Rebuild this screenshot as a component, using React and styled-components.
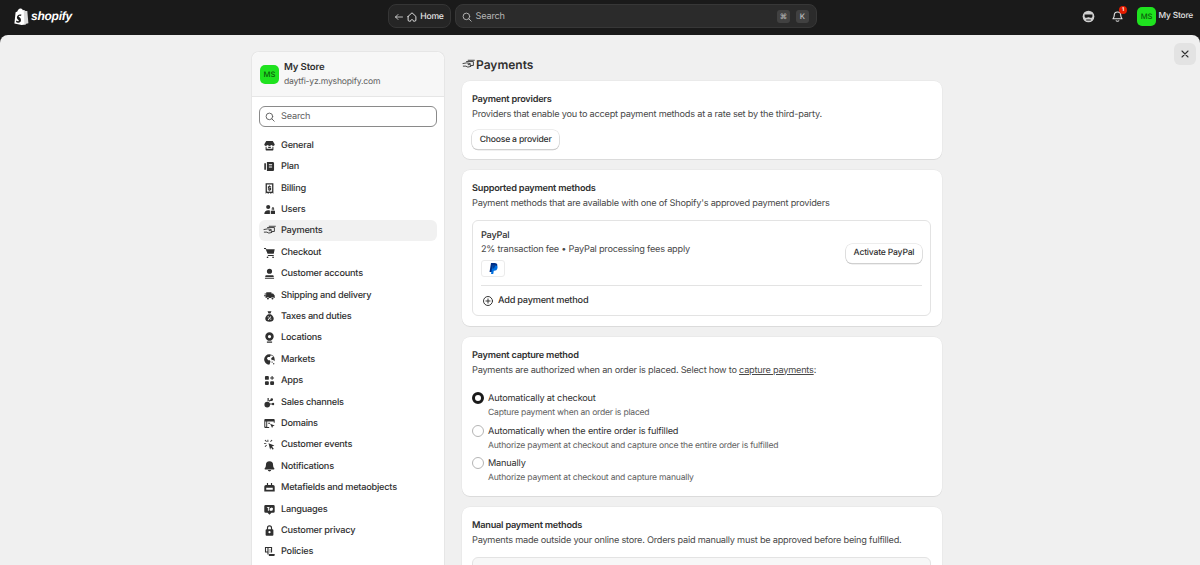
import React from 'react';
import styled, { createGlobalStyle } from 'styled-components';

const GlobalStyle = createGlobalStyle`
  html, body {
    margin: 0;
    height: 100%;
    overflow: hidden;
    background: #1a1a1a;
    font-family: Inter, "Liberation Sans", sans-serif;
    color: #303030;
    text-rendering: geometricPrecision;
  }
  * { box-sizing: border-box; }
`;

const Page = styled.div`
  height: 565px;
  display: flex;
  flex-direction: column;
  overflow: hidden;
`;

const TopBar = styled.header`
  height: 35px;
  flex: none;
  display: grid;
  grid-template-columns: 1fr auto 1fr;
  align-items: center;
  background: #1a1a1a;
  padding: 0 7px 3px 14px;
`;

const LogoWrap = styled.div`
  display: flex;
  align-items: center;
  gap: 2px;
`;

const LogoText = styled.span`
  font-family: "Liberation Sans", sans-serif;
  font-weight: 700;
  font-style: italic;
  font-size: 12px;
  letter-spacing: -0.25px;
  color: #fff;
`;

const CenterBar = styled.div`
  display: flex;
  gap: 4px;
  margin-left: -3px;
`;

const HomeButton = styled.div`
  width: 63px;
  height: 24px;
  display: flex;
  align-items: center;
  justify-content: center;
  gap: 2px;
  padding-top: 1px;
  border-radius: 8px;
  background: #252525;
  border: 1px solid #353535;
  color: #e3e3e3;
  font-size: 8.6px;
  letter-spacing: -0.2px;
  font-weight: 500;
`;

const SearchBar = styled.div`
  width: 362px;
  height: 24px;
  display: flex;
  align-items: center;
  gap: 3px;
  padding: 1px 7px 0 5px;
  border-radius: 8px;
  background: #2b2b2b;
  border: 1px solid #373737;
  color: #b5b5b5;
  font-size: 9.2px;
  letter-spacing: -0.2px;
`;

const Spacer = styled.span`
  flex: 1;
`;

const Kbd = styled.span`
  width: 12.5px;
  height: 13px;
  display: flex;
  align-items: center;
  justify-content: center;
  border-radius: 3px;
  background: #414141;
  color: #b5b5b5;
  font-size: 7.5px;
  font-weight: 600;
  margin-left: 3.5px;
`;

const RightBar = styled.div`
  display: flex;
  align-items: center;
  justify-content: flex-end;
  color: #e3e3e3;
`;

const TopIcon = styled.span`
  position: relative;
  display: flex;
  margin-right: ${p => p.$gap}px;
`;

const Badge = styled.span`
  position: absolute;
  top: -4px;
  right: -3px;
  width: 8px;
  height: 8px;
  display: flex;
  align-items: center;
  justify-content: center;
  border-radius: 50%;
  background: #e51c00;
  color: #fff;
  font-size: 5px;
  font-weight: 700;
`;

const Avatar = styled.span`
  width: ${p => p.$size}px;
  height: ${p => p.$size}px;
  flex: none;
  display: flex;
  align-items: center;
  justify-content: center;
  border-radius: 5px;
  background: #1fe21f;
  color: #0b5c0b;
  font-size: 7.6px;
  font-weight: 500;
`;

const TopStore = styled.span`
  margin-left: 2.5px;
  font-size: 8.4px;
  letter-spacing: -0.2px;
  font-weight: 500;
  color: #e3e3e3;
  white-space: nowrap;
`;

const Main = styled.main`
  position: relative;
  flex: 1;
  min-height: 0;
  display: flex;
  justify-content: center;
  gap: 17px;
  padding: 16px 7px 0 0;
  background: #f0f0f0;
  border-radius: 8px 8px 0 0;
  overflow: hidden;
`;

const CloseButton = styled.button`
  position: absolute;
  top: 8px;
  right: 4px;
  width: 22px;
  height: 22px;
  display: flex;
  align-items: center;
  justify-content: center;
  padding: 0;
  border: none;
  border-radius: 6px;
  background: #e3e3e3;
  color: #303030;
`;

const Sidebar = styled.aside`
  width: 194px;
  flex: none;
  background: #fff;
  border: 1px solid #e6e6e6;
  border-bottom: none;
  border-radius: 8px 8px 0 0;
  align-self: flex-start;
  height: 530px;
`;

const StoreHeader = styled.div`
  height: 45px;
  display: flex;
  align-items: center;
  gap: 5px;
  padding: 0 8px;
  background: #f7f7f7;
  border-bottom: 1px solid #e6e6e6;
  border-radius: 8px 8px 0 0;
`;

const StoreName = styled.div`
  font-size: 9.6px;
  letter-spacing: -0.15px;
  line-height: 15px;
  font-weight: 600;
`;

const StoreUrl = styled.div`
  font-size: 8.6px;
  letter-spacing: -0.2px;
  line-height: 14px;
  color: #616161;
`;

const SideBody = styled.div`
  padding: 9px 7px 8px;
`;

const SideSearch = styled.div`
  height: 21px;
  display: flex;
  align-items: center;
  gap: 5px;
  padding: 0 2px 0 4px;
  margin-bottom: 7px;
  border: 1px solid #8a8a8a;
  border-radius: 6px;
  color: #616161;
  font-size: 9.2px;
  letter-spacing: -0.2px;
`;

const NavItem = styled.div`
  height: 21.42px;
  display: flex;
  align-items: center;
  gap: 5px;
  padding: 1px 4px 0;
  border-radius: 6px;
  font-size: 9.2px;
  letter-spacing: -0.23px;
  font-weight: 500;
  color: #303030;
  background: ${p => (p.$active ? '#f1f1f1' : 'transparent')};
  & svg { flex: none; }
`;

const Content = styled.div`
  width: 480px;
  flex: none;
  display: flex;
  flex-direction: column;
`;

const PageTitle = styled.h1`
  height: 15px;
  margin: 6px 0 9px;
  display: flex;
  align-items: center;
  gap: 1px;
  font-size: 12px;
  font-weight: 600;
  color: #303030;
`;

const Card = styled.section`
  flex: none;
  margin-bottom: 11px;
  padding: 11px 11px 10px 10px;
  background: #fff;
  border-radius: 8px;
  box-shadow: 0 1px 0 rgba(26, 26, 26, 0.07), 0 0 0 0.5px rgba(0, 0, 0, 0.05);
`;

const CardTitle = styled.h2`
  margin: 0;
  font-size: 9.2px;
  letter-spacing: -0.23px;
  line-height: 15.5px;
  font-weight: 600;
`;

const CardText = styled.p`
  margin: 0;
  font-size: 9.2px;
  letter-spacing: -0.23px;
  line-height: 14.5px;
  color: #4a4a4a;
`;

const TextLink = styled.span`
  text-decoration: underline;
`;

const Button = styled.button`
  height: 19px;
  padding: 0 7.7px;
  border: none;
  border-radius: 6px;
  background: #fff;
  box-shadow: 0 0 0 0.5px #dcdcdc, 0 0.7px 0 0.5px #c4c4c4;
  font-family: inherit;
  text-rendering: geometricPrecision;
  font-size: 8.6px;
  letter-spacing: -0.2px;
  font-weight: 500;
  color: #303030;
`;

const ProviderButton = styled(Button)`
  display: block;
  margin-top: 8px;
`;

const InnerBox = styled.div`
  margin-top: 9px;
  padding: 8px 8px 0;
  border: 1px solid #e3e3e3;
  border-radius: 6px;
  background: ${p => (p.$muted ? '#f7f7f7' : '#fff')};
  min-height: ${p => p.$minH || 0}px;
`;

const MethodRow = styled.div`
  display: flex;
  align-items: center;
  justify-content: space-between;
  padding-bottom: 8px;
  border-bottom: 1px solid #e3e3e3;
`;

const MethodName = styled.div`
  font-size: 9.2px;
  letter-spacing: -0.23px;
  line-height: 14px;
  font-weight: 500;
`;

const MethodFee = styled.div`
  font-size: 9.2px;
  letter-spacing: -0.23px;
  line-height: 14px;
  color: #4a4a4a;
`;

const PayLogo = styled.div`
  width: 24px;
  height: 17px;
  margin-top: 3px;
  display: flex;
  align-items: center;
  justify-content: center;
  border: 1px solid #ebebeb;
  border-radius: 3px;
`;

const AddRow = styled.div`
  height: 29px;
  display: flex;
  align-items: center;
  gap: 4px;
  padding-left: 1px;
  font-size: 9.2px;
  letter-spacing: -0.23px;
  font-weight: 500;
`;

const RadioGroup = styled.div`
  margin-top: 13px;
  height: 95px;
`;

const RadioRow = styled.div`
  height: 32.6px;
  display: grid;
  grid-template-columns: 12px 1fr;
  column-gap: 4px;
  align-content: start;
`;

const RadioDot = styled.span`
  width: 12px;
  height: 12px;
  margin-top: 1px;
  border-radius: 50%;
  background: #fff;
  border: ${p => (p.$on ? '3.5px solid #1a1a1a' : '1px solid #b5b5b5')};
`;

const RadioLabel = styled.span`
  padding-top: 1px;
  font-size: 9.2px;
  letter-spacing: -0.18px;
  line-height: 14px;
`;

const RadioHelp = styled.span`
  grid-column: 2;
  font-size: 8.6px;
  letter-spacing: -0.22px;
  line-height: 14px;
  color: #616161;
`;

const Svg = ({ size = 12, children, stroke }) => (
  <svg
    width={size}
    height={size}
    viewBox="0 0 20 20"
    fill={stroke ? 'none' : '#303030'}
    stroke={stroke ? 'currentColor' : 'none'}
    strokeWidth={stroke ? 1.6 : 0}
    strokeLinecap="round"
    strokeLinejoin="round"
  >
    {children}
  </svg>
);

const icons = {
  store: <path fillRule="evenodd" d="M5 3h10l3 5c0 1.6-1.1 2.6-2.5 2.6-.9 0-1.9-.4-2.5-1.2-.6.8-1.7 1.2-3 1.2s-2.400-.4-3-1.200c-.6.8-1.600 1.200-2.500 1.200C3.100 10.600 2 9.600 2 8l3-5zM4 12c.5.100 1 .100 1.500 0V15h9v-3c.5.100 1 .100 1.500 0v4.500c0 .5-.5 1-1 1H5c-.5 0-1-.5-1-1V12zM8 12h4v2H8z" />,
  plan: <path fillRule="evenodd" d="M6 3h9c1 0 2 1 2 2v10c0 1-1 2-2 2H6V3zM9 6.500v1.500h5V6.500H9zM9 10v1.500h5V10H9zM2 5h2.500v10H2z" />,
  billing: <path fillRule="evenodd" d="M4 2h12v16l-2-1.300-2 1.300-2-1.300-2 1.300-2-1.300-2 1.300V2zm2 2v10.500l2 .6 2-.6 2 .6 2-.6V4H6zm3.200 1.500h1.600v1h1.700V8H9.300v.7h3.200v3.800h-1.700v1H9.200v-1H7.500V11h3.200v-.8H7.500V6.500h1.700v-1z" />,
  users: <path d="M8 3a3.200 3.200 0 1 1 0 6.400A3.200 3.200 0 0 1 8 3zM2 17c0-4 2.500-6 6-6 1 0 1.900.2 2.600.5V17H2zM12 12h6.500v5H12zM13.500 8.500a1.800 1.800 0 0 1 3.600 0V11h-1.300V8.500a.5.5 0 0 0-1 0V11h-1.300z" />,
  payments: (
    <g fill="none" stroke="#303030" strokeWidth="1.4" strokeLinejoin="round" strokeLinecap="round">
      <path d="M7 5.500h10.500v6H13" />
      <path d="M9.500 3.500H19" />
      <path d="M1.500 8.500 7 7.500l5.500 1c1 .3.8 1.700-.3 1.700H9.500" />
      <path d="M2 12.500h4l3 1.500 4.500-1" />
    </g>
  ),
  cart: <path d="M1.500 3h3l.6 2H18l-1.500 7H7L4 4.500H1.500V3zM7.500 14h9v1.500h-9zM7 16a1.300 1.300 0 1 1 0 2.600A1.300 1.300 0 0 1 7 16zM15.500 16a1.300 1.300 0 1 1 0 2.600 1.300 1.300 0 0 1 0-2.600z" />,
  person: <path d="M10 2.500a4 4 0 1 1 0 8 4 4 0 0 1 0-8zM5 12.500h10c1 0 1.500 1 1.500 2v1h-13v-1c0-1 .5-2 1.500-2zM3 16.500h14V18H3z" />,
  truck: <path fillRule="evenodd" d="M5 5h8v2h2.500L18 10v4h-1.300a2.200 2.200 0 0 0-4.200 0h-3a2.200 2.200 0 0 0-4.200 0H4v-3H1.500V9.500H5V8.500H2.500V7H5V5zM7.600 13a1.500 1.500 0 1 1 0 3 1.500 1.500 0 0 1 0-3zm7 0a1.500 1.500 0 1 1 0 3 1.500 1.500 0 0 1 0-3z" />,
  bag: <path fillRule="evenodd" d="M7 2h6l-1.500 3.500h-3L7 2zm1 4.500h4c3 2 4.500 4.500 4.500 7 0 3-2.500 4.500-6.500 4.500S3.500 16.500 3.500 13.500c0-2.500 1.500-5 4.500-7zm-.7 8.300 1 .8 4.400-5.100-1-.8-4.400 5.100zM8 9.500a1 1 0 1 0 0 2 1 1 0 0 0 0-2zm4 3.500a1 1 0 1 0 0 2 1 1 0 0 0 0-2z" />,
  pin: <path fillRule="evenodd" d="M10 2a6.500 6.500 0 0 1 6.500 6.500c0 3-2.200 5.200-4.500 6.500H8C5.700 13.700 3.500 11.500 3.500 8.500A6.500 6.500 0 0 1 10 2zm0 4a2.500 2.500 0 1 0 0 5 2.500 2.500 0 0 0 0-5zM6 16.300h8V18H6z" />,
  globe: <path fillRule="evenodd" d="M10 2a8 8 0 0 1 8 8c0 .9-.2 1.800-.4 2.500l-2.100-2.100-2 .6-1-2.500 1.500-2 2-.5A6 6 0 0 0 12 3.500l-1.500 2.500H7.500L6 8.500l2 2.500h2.500l1 2-1 3.500-1 1.500A8 8 0 0 1 10 2zM14 13a1 1 0 1 1 0 2 1 1 0 0 1 0-2zM16.500 15.500a1 1 0 1 1 0 2 1 1 0 0 1 0-2z" />,
  apps: <path d="M4.500 3h3A1.500 1.500 0 0 1 9 4.500v3A1.500 1.500 0 0 1 7.500 9h-3A1.500 1.500 0 0 1 3 7.500v-3A1.500 1.500 0 0 1 4.500 3zM4.500 11h3A1.500 1.500 0 0 1 9 12.500v3A1.500 1.500 0 0 1 7.500 17h-3A1.500 1.500 0 0 1 3 15.500v-3A1.500 1.500 0 0 1 4.500 11zM12.500 11h3a1.500 1.500 0 0 1 1.500 1.500v3a1.500 1.500 0 0 1-1.500 1.500h-3a1.500 1.500 0 0 1-1.500-1.500v-3a1.500 1.500 0 0 1 1.500-1.500zM13.200 3h1.600v2.200H17v1.600h-2.200V9h-1.600V6.800H11V5.200h2.200z" />,
  channels: <path d="M6.500 9a4.300 4.300 0 1 1 0 8.600 4.300 4.300 0 0 1 0-8.600zM7 3h1.800v5H7zM13.500 3.500a2 2 0 1 1 0 4 2 2 0 0 1 0-4zM15.500 10.500a1.800 1.800 0 1 1 0 3.600 1.800 1.800 0 0 1 0-3.600zM9 7l4-2v1.500L10 9zM10.500 11l4 .5v1l-4 .5z" />,
  domains: <path fillRule="evenodd" d="M3.500 3h13A1.500 1.500 0 0 1 18 4.500V9h-1.500V7h-10v8.500h3V17h-6A1.500 1.500 0 0 1 2 15.500v-11A1.500 1.500 0 0 1 3.500 3zM8 9h3l-.2 1.500H8V9zM11 10.500 18 13l-2.800 1.200L14 17l-3-6.500zM3.500 7v8h1.500V7z" />,
  events: <path d="M8.500 8 17.500 11.500 13.800 13 16.500 16.500 15 18 12.300 14.500 11 18 8.500 8zM6.800 2.500h1.400V6H6.800zM1.500 8h3.500v1.400H1.500zM2.500 3.500l1-1 2.500 2.500-1 1zM2.500 13l2.500-2.500 1 1-2.500 2.500zM11 5l2.500-2.500 1 1L12 6z" />,
  bell: <path d="M10 2a5.500 5.500 0 0 1 5.500 5.500c0 2.500.7 4 2 5.500.4.5 0 1.500-.7 1.500H3.200c-.7 0-1.100-1-.7-1.500 1.300-1.500 2-3 2-5.500A5.500 5.500 0 0 1 10 2zM7.300 15.500h5.400a2.800 2.800 0 0 1-5.400 0z" />,
  meta: <path fillRule="evenodd" d="M6 3h1.800v3h4.400V3H14v3h1.500A2.500 2.500 0 0 1 18 8.500V16H2V8.500A2.500 2.500 0 0 1 4.500 6H6V3zM5 10.500v3h10v-3H5z" />,
  language: <path fillRule="evenodd" d="M4 3h12a2 2 0 0 1 2 2v8a2 2 0 0 1-2 2h-3l-3 3-3-3H4a2 2 0 0 1-2-2V5a2 2 0 0 1 2-2zm2 3v1.300h1.500V12H9V7.300h1V6H6zm6 1.500a2 2 0 0 0-1.500 3.200V12h4v-1.300A2 2 0 0 0 12 7.500z" />,
  lock: <path fillRule="evenodd" d="M10 2a4 4 0 0 1 4 4v2h.5A1.500 1.500 0 0 1 16 9.500v7a1.500 1.500 0 0 1-1.500 1.500h-9A1.500 1.500 0 0 1 4 16.500v-7A1.500 1.500 0 0 1 5.500 8H6V6a4 4 0 0 1 4-4zm0 1.800A2.200 2.200 0 0 0 7.800 6v2h4.400V6A2.200 2.200 0 0 0 10 3.800zm0 7a1.700 1.700 0 1 0 0 3.400 1.700 1.700 0 0 0 0-3.400z" />,
  policy: <path fillRule="evenodd" d="M3 3h11v8.500h-1.700V4.700H8.500v10H6.800v-3H3V3zm1.700 1.700V10h2.100V4.700H4.700zM10 7h1.500v1.500H10zM10 10h1.500v1.500H10zM9 14h9v1.500c0 1-.8 1.500-1.500 1.500H9v-3z" />,
};

const navItems = [
  ['General', 'store'],
  ['Plan', 'plan'],
  ['Billing', 'billing'],
  ['Users', 'users'],
  ['Payments', 'payments'],
  ['Checkout', 'cart'],
  ['Customer accounts', 'person'],
  ['Shipping and delivery', 'truck'],
  ['Taxes and duties', 'bag'],
  ['Locations', 'pin'],
  ['Markets', 'globe'],
  ['Apps', 'apps'],
  ['Sales channels', 'channels'],
  ['Domains', 'domains'],
  ['Customer events', 'events'],
  ['Notifications', 'bell'],
  ['Metafields and metaobjects', 'meta'],
  ['Languages', 'language'],
  ['Customer privacy', 'lock'],
  ['Policies', 'policy'],
];

const captureOptions = [
  ['Automatically at checkout', 'Capture payment when an order is placed', true],
  ['Automatically when the entire order is fulfilled', 'Authorize payment at checkout and capture once the entire order is fulfilled', false],
  ['Manually', 'Authorize payment at checkout and capture manually', false],
];

const SearchIcon = ({ size = 12 }) => (
  <Svg size={size} stroke>
    <circle cx="9" cy="9" r="5.500" />
    <path d="m13 13 4 4" />
  </Svg>
);

const ShopifyBag = () => (
  <svg width="15" height="17" viewBox="0 0 15 17">
    <path fill="#fff" d="M3.300 3.600C3.700 1.700 5 .4 6.300.4c.4 0 .7.100.9.400.9 0 1.400.700 1.600 1.500l.9-.3.200.1L11.900 16.600 7.600 17 .4 15.600 1.600 4.300l1.700-.7z" />
    <path fill="#d9d9d9" d="m9.700 1.900.5 0 1.300 1.100 1.800.1 1.100 12.100-4 1z" />
    <path fill="#1a1a1a" d="M7.500 6.200 7 8c-.5-.2-1-.3-1.400-.2-.9.100-.9.600-.9.800 0 .7 2.300 1.100 2.300 3.400 0 1.700-1.100 2.700-2.500 2.800-1 0-2-.3-2.500-.8l.4-1.500c.4.300 1.200.8 1.800.7.400 0 .6-.3.600-.6 0-1-1.900-1-1.900-3 0-1.600 1.200-3 3.300-3.100.7 0 1 .1 1.300.3z" />
  </svg>
);

const PayPalMark = () => (
  <svg width="9" height="11" viewBox="0 0 18 22">
    <path fill="#003087" d="M4 0h7c4 0 6.500 2 5.500 6-1 4.500-4 6-7.500 6H7l-1 6H1L4 0z" />
    <path fill="#0070e0" d="M7 5h6c3 0 4.800 1.500 4 5-.8 4-3.500 5.500-6.500 5.500H9.500L8.500 22H4L7 5z" />
    <path fill="#001c64" d="M7 5h5c.5 2.800-1.500 6-5.500 7H7l.0-7z" opacity="0.6" />
  </svg>
);

const App = () => (
  <Page>
    <GlobalStyle />
    <TopBar>
      <LogoWrap>
        <ShopifyBag />
        <LogoText>shopify</LogoText>
      </LogoWrap>
      <CenterBar>
        <HomeButton>
          <svg width="10" height="10" viewBox="0 0 20 20" fill="none" stroke="currentColor" strokeWidth="1.600" strokeLinecap="round" strokeLinejoin="round">
            <path d="M17 10H3m5-5-5 5 5 5" />
          </svg>
          <svg width="12" height="12" viewBox="0 0 20 20" fill="none" stroke="currentColor" strokeWidth="1.600" strokeLinecap="round" strokeLinejoin="round">
            <path d="M3.500 9 10 3l6.500 6v6a2 2 0 0 1-2 2h-2c0-1.500-1-2.500-2.500-2.500S7.500 15.500 7.500 17h-2a2 2 0 0 1-2-2V9z" />
          </svg>
          Home
        </HomeButton>
        <SearchBar>
          <SearchIcon size={12} />
          Search
          <Spacer />
          <Kbd>⌘</Kbd>
          <Kbd>K</Kbd>
        </SearchBar>
      </CenterBar>
      <RightBar>
        <TopIcon $gap={16}>
          <svg width="13" height="13" viewBox="0 0 20 20">
            <circle cx="10" cy="10" r="9" fill="#d0d0d0" />
            <path fill="#1a1a1a" d="M4 7h12v2.500c0 1.500-1 2.500-2.500 2.500-1.500 0-2.500-1-3.500-1s-2 1-3.500 1C5 12 4 11 4 9.500V7zM6.500 14.500h7V16h-7z" />
          </svg>
        </TopIcon>
        <TopIcon $gap={13}>
          <svg width="13" height="13" viewBox="0 0 20 20" fill="none" stroke="currentColor" strokeWidth="1.700" strokeLinejoin="round" strokeLinecap="round">
            <path d="M10 3a5 5 0 0 1 5 5c0 2.500.6 3.800 2 5.500H3c1.400-1.700 2-3 2-5.500a5 5 0 0 1 5-5zM8 16.500c.5 1 3.500 1 4 0" />
          </svg>
          <Badge>1</Badge>
        </TopIcon>
        <Avatar $size={19}>MS</Avatar>
        <TopStore>My Store</TopStore>
      </RightBar>
    </TopBar>
    <Main>
      <CloseButton>
        <svg width="12" height="12" viewBox="0 0 20 20" fill="none" stroke="currentColor" strokeWidth="1.800" strokeLinecap="round">
          <path d="m5 5 10 10M15 5 5 15" />
        </svg>
      </CloseButton>
      <Sidebar>
        <StoreHeader>
          <Avatar $size={19}>MS</Avatar>
          <div>
            <StoreName>My Store</StoreName>
            <StoreUrl>daytfi-yz.myshopify.com</StoreUrl>
          </div>
        </StoreHeader>
        <SideBody>
          <SideSearch>
            <SearchIcon size={12} />
            Search
          </SideSearch>
          {navItems.map(([label, icon]) => (
            <NavItem key={label} $active={label === 'Payments'}>
              <Svg size={13}>{icons[icon]}</Svg>
              {label}
            </NavItem>
          ))}
        </SideBody>
      </Sidebar>
      <Content>
        <PageTitle>
          <Svg size={13}>{icons.payments}</Svg>
          Payments
        </PageTitle>
        <Card>
          <CardTitle>Payment providers</CardTitle>
          <CardText>Providers that enable you to accept payment methods at a rate set by the third-party.</CardText>
          <ProviderButton>Choose a provider</ProviderButton>
        </Card>
        <Card>
          <CardTitle>Supported payment methods</CardTitle>
          <CardText>Payment methods that are available with one of Shopify's approved payment providers</CardText>
          <InnerBox>
            <MethodRow>
              <div>
                <MethodName>PayPal</MethodName>
                <MethodFee>2% transaction fee • PayPal processing fees apply</MethodFee>
                <PayLogo><PayPalMark /></PayLogo>
              </div>
              <Button>Activate PayPal</Button>
            </MethodRow>
            <AddRow>
              <Svg size={12} stroke>
                <circle cx="10" cy="10" r="7.500" />
                <path d="M10 6.500v7M6.500 10h7" />
              </Svg>
              Add payment method
            </AddRow>
          </InnerBox>
        </Card>
        <Card>
          <CardTitle>Payment capture method</CardTitle>
          <CardText>
            Payments are authorized when an order is placed. Select how to <TextLink>capture payments</TextLink>:
          </CardText>
          <RadioGroup>
            {captureOptions.map(([label, help, on]) => (
              <RadioRow key={label}>
                <RadioDot $on={on} />
                <RadioLabel>{label}</RadioLabel>
                <RadioHelp>{help}</RadioHelp>
              </RadioRow>
            ))}
          </RadioGroup>
        </Card>
        <Card>
          <CardTitle>Manual payment methods</CardTitle>
          <CardText>Payments made outside your online store. Orders paid manually must be approved before being fulfilled.</CardText>
          <InnerBox $muted $minH={60} />
        </Card>
      </Content>
    </Main>
  </Page>
);

export default App;
